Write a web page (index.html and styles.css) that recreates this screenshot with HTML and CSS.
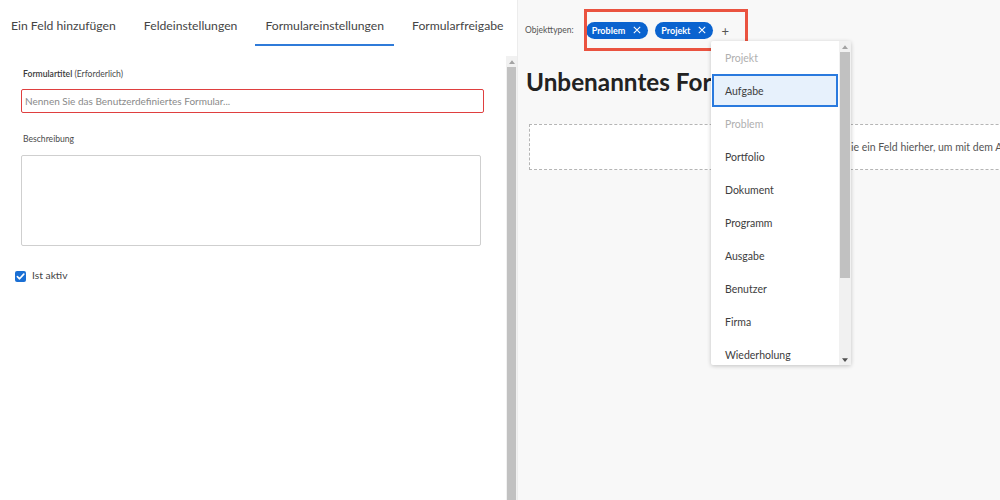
FILE: index.html
```html
<!DOCTYPE html>
<html lang="de">
<head>
<meta charset="utf-8">
<title>Formulareinstellungen</title>
<link rel="stylesheet" href="styles.css">
</head>
<body>
<div class="app">
  <section class="left">
    <nav class="tabs">
      <div class="tab">Ein Feld hinzufügen</div>
      <div class="tab">Feldeinstellungen</div>
      <div class="tab active">Formulareinstellungen</div>
      <div class="tab">Formularfreigabe</div>
    </nav>
    <div class="left-body">
      <div class="form">
        <div class="label"><b>Formulartitel</b> (Erforderlich)</div>
        <div class="input invalid"><span class="placeholder">Nennen Sie das Benutzerdefiniertes Formular...</span></div>
        <div class="label label-desc">Beschreibung</div>
        <div class="textarea"></div>
        <div class="check-row">
          <span class="checkbox"><svg viewBox="0 0 12 12" width="11" height="11"><path d="M2.6 6.2 L5 8.5 L9.6 3.4" fill="none" stroke="#fff" stroke-width="1.8" stroke-linecap="round" stroke-linejoin="round"/></svg></span>
          <span class="check-label">Ist aktiv</span>
        </div>
      </div>
      <div class="scrollbar">
        <div class="sb-arrow"><svg viewBox="0 0 8 5" width="6" height="4"><path d="M0 5 L4 0 L8 5 Z" fill="#a3a3a3"/></svg></div>
        <div class="sb-thumb"></div>
      </div>
    </div>
  </section>
  <section class="right">
    <div class="types-row">
      <span class="types-label">Objekttypen:</span>
      <span class="chip">Problem <svg viewBox="0 0 10 10" width="8" height="8"><path d="M1 1 L9 9 M9 1 L1 9" stroke="#fff" stroke-width="1.3"/></svg></span>
      <span class="chip">Projekt <svg viewBox="0 0 10 10" width="8" height="8"><path d="M1 1 L9 9 M9 1 L1 9" stroke="#fff" stroke-width="1.3"/></svg></span>
      <span class="plus">+</span>
    </div>
    <h1 class="form-title">Unbenanntes Formular</h1>
    <div class="dropzone"><span class="dz-text">Ziehen Sie ein Feld hierher, um mit dem Aufbau zu beginnen</span></div>

    <div class="highlight"></div>

    <div class="dropdown">
      <ul class="dd-list">
        <li class="dd-item disabled">Projekt</li>
        <li class="dd-item focused">Aufgabe</li>
        <li class="dd-item disabled">Problem</li>
        <li class="dd-item">Portfolio</li>
        <li class="dd-item">Dokument</li>
        <li class="dd-item">Programm</li>
        <li class="dd-item">Ausgabe</li>
        <li class="dd-item">Benutzer</li>
        <li class="dd-item">Firma</li>
        <li class="dd-item">Wiederholung</li>
      </ul>
      <div class="dd-scroll">
        <div class="dd-arrow"><svg viewBox="0 0 8 5" width="6" height="4"><path d="M0 5 L4 0 L8 5 Z" fill="#a3a3a3"/></svg></div>
        <div class="dd-thumb"></div>
        <div class="dd-track"></div>
        <div class="dd-arrow"><svg viewBox="0 0 8 5" width="6" height="4"><path d="M0 0 L4 5 L8 0 Z" fill="#505050"/></svg></div>
      </div>
    </div>
  </section>
</div>
</body>
</html>
```

FILE: styles.css
```css
* { box-sizing: border-box; }
html, body { margin: 0; padding: 0; }
body {
  font-family: Lato, "Open Sans", "Liberation Sans", sans-serif;
  color: #333;
  background: #fff;
  width: 1000px;
  height: 500px;
  overflow: hidden;
}
.app {
  display: flex;
  height: 500px;
}
.left {
  width: 517px;
  display: flex;
  flex-direction: column;
  background: #fff;
}
.tabs {
  display: flex;
  gap: 8px;
  padding-left: 1px;
  height: 56px;
}
.tab {
  height: 46px;
  padding: 18px 10px 0;
  font-size: 12.2px;
  color: #454545;
  white-space: nowrap;
  border-bottom: 2px solid transparent;
}
.tab.active {
  border-bottom: 2px solid #2f7bd9;
}
.left-body {
  flex: 1;
  display: flex;
}
.form {
  width: 506px;
  padding: 13px 0 0 21px;
}
.label {
  font-size: 8.6px;
  color: #4a4a4a;
  padding-left: 2px;
  height: 10px;
  line-height: 10px;
}
.label b { font-weight: 600; color: #3a3a3a; }
.input {
  margin-top: 10px;
  width: 463px;
  height: 24px;
  border: 1px solid #ccc;
  border-radius: 2px;
  padding: 0 3px;
  display: flex;
  align-items: center;
}
.input.invalid { border-color: #df3f3f; }
.placeholder {
  font-size: 10px;
  color: #8a8a8a;
}
.label-desc {
  margin-top: 21px;
}
.textarea {
  margin-top: 11px;
  width: 460px;
  height: 91px;
  border: 1px solid #cfcfcf;
  border-radius: 2px;
}
.check-row {
  margin: 21px 0 0 -6px;
  display: flex;
  align-items: center;
  gap: 6px;
}
.checkbox {
  width: 11px;
  height: 11px;
  border-radius: 2px;
  background: #1a6fd4;
  display: flex;
  align-items: center;
  justify-content: center;
  margin-top: 4px;
}
.check-label {
  font-size: 10.3px;
  color: #444;
}
.scrollbar {
  width: 11px;
  background: #f1f1f1;
  display: flex;
  flex-direction: column;
}
.sb-arrow {
  height: 11px;
  display: flex;
  align-items: center;
  justify-content: center;
}
.sb-thumb {
  flex: 1;
  margin: 0 1px;
  background: #c1c1c1;
}
.right {
  flex: 1;
  position: relative;
  background: #f8f8f8;
  border-left: 1px solid #ececec;
  overflow: hidden;
  padding: 0 0 0 7px;
}
.types-row {
  display: flex;
  align-items: center;
  height: 62px;
  padding-bottom: 2px;
}
.types-label {
  font-size: 8.5px;
  color: #555;
  margin-right: 12px;
}
.chip {
  display: inline-flex;
  align-items: center;
  gap: 8px;
  height: 17px;
  padding: 0 7px 0 6px;
  border-radius: 9px;
  background: #0a63cf;
  color: #fff;
  font-size: 9px;
  font-weight: 700;
  margin-right: 7px;
}
.plus {
  font-size: 13px;
  color: #555;
  margin-left: 1px;
  margin-top: 2px;
}
.form-title {
  margin: 5px 0 0 1px;
  font-size: 24.3px;
  font-weight: 700;
  color: #222;
  white-space: nowrap;
  line-height: 30px;
}
.dropzone {
  margin: 27px 0 0 4px;
  width: 600px;
  height: 46px;
  background: #fff;
  border: 1px dashed #b5b5b5;
  display: flex;
  align-items: center;
  padding-left: 281px;
}
.dz-text {
  font-size: 10.5px;
  color: #555;
  white-space: nowrap;
}
.highlight {
  position: absolute;
  left: 66px;
  top: 9px;
  width: 164px;
  height: 42px;
  border: 3px solid #ea5340;
}
.dropdown {
  position: absolute;
  left: 193px;
  top: 41px;
  width: 140px;
  height: 324px;
  background: #fff;
  box-shadow: 0 1px 4px rgba(0,0,0,0.22);
  display: flex;
  border-radius: 2px;
}
.dd-list {
  list-style: none;
  margin: 0;
  padding: 0;
  width: 128px;
  overflow: hidden;
}
.dd-item {
  height: 33px;
  display: flex;
  align-items: center;
  padding-left: 14px;
  font-size: 10.5px;
  color: #3d3d3d;
}
.dd-item.disabled { color: #b0b0b0; }
.dd-item.focused {
  background: #e7f1fc;
  border: 2px solid #2a7ade;
  padding-left: 11px;
  margin-left: 1px;
  margin-right: 1px;
}
.dd-scroll {
  width: 12px;
  display: flex;
  flex-direction: column;
  background: #f1f1f1;
}
.dd-arrow {
  height: 11px;
  display: flex;
  align-items: center;
  justify-content: center;
}
.dd-thumb {
  height: 226px;
  margin: 0 1px;
  background: #c1c1c1;
}
.dd-track { flex: 1; }
```
